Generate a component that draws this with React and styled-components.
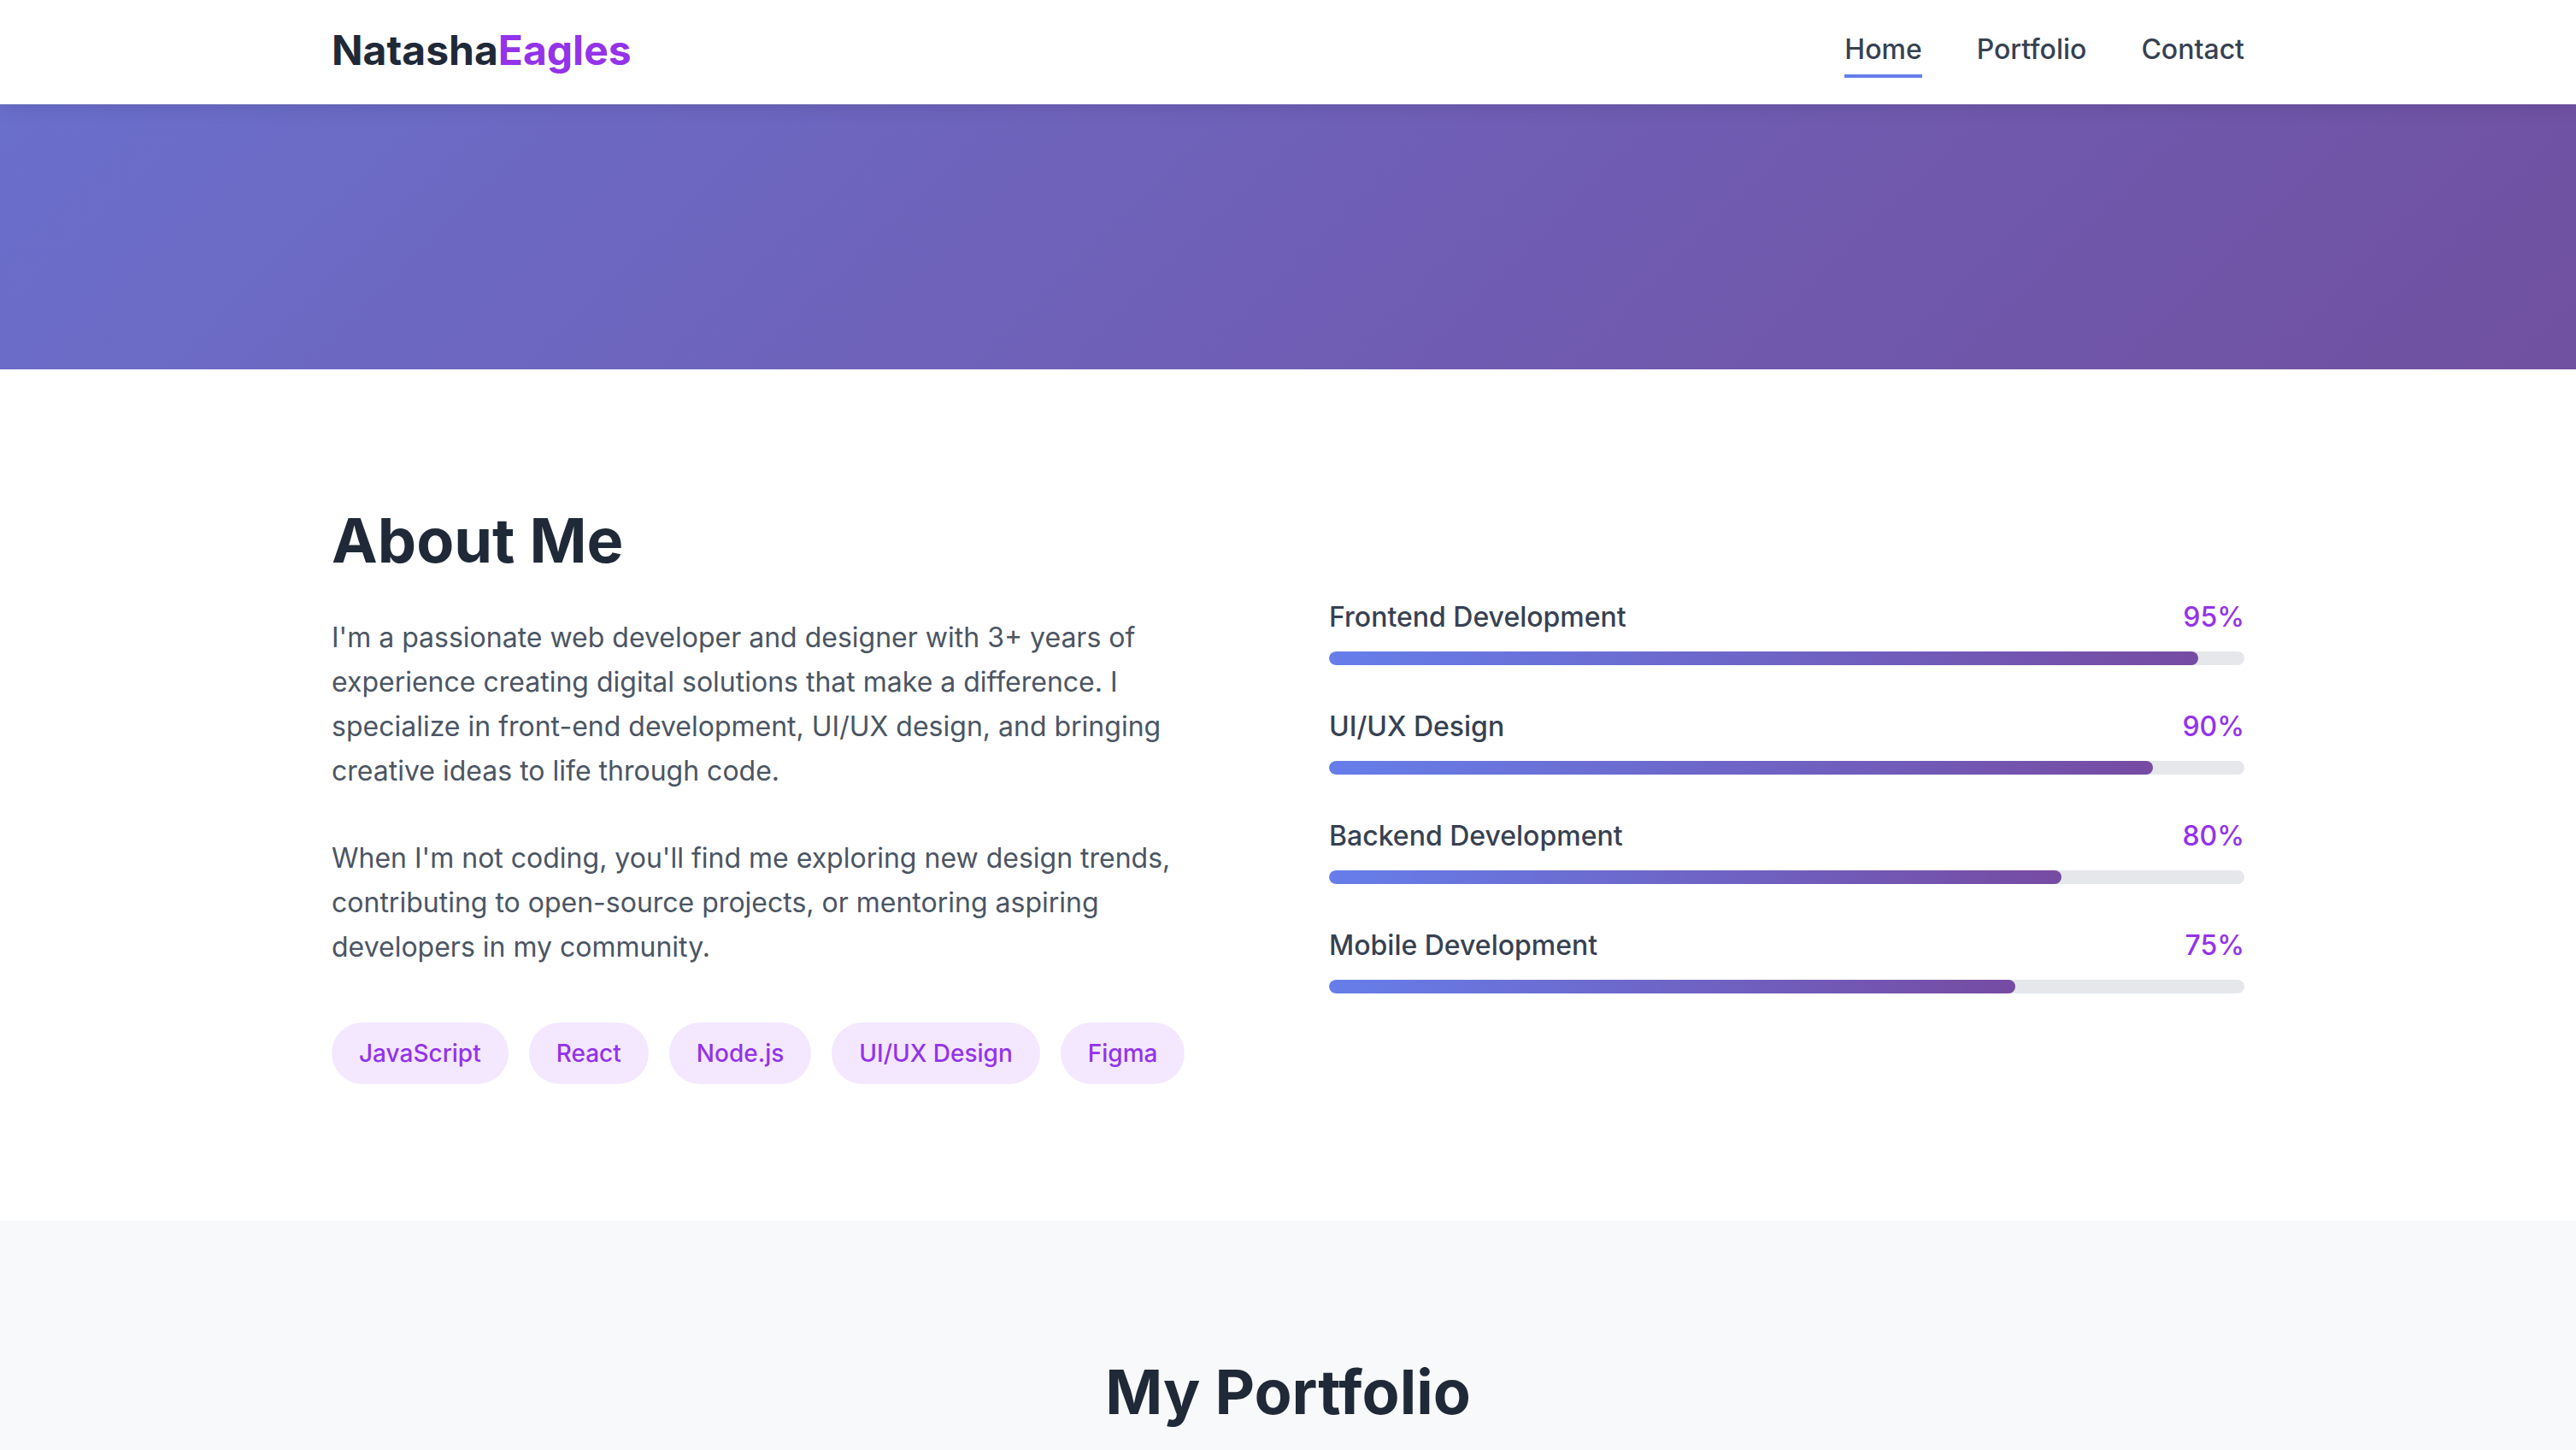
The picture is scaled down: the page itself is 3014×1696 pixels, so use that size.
import React from "react";
import styled, { createGlobalStyle } from "styled-components";

const skills = [
  { name: "Frontend Development", level: 95 },
  { name: "UI/UX Design", level: 90 },
  { name: "Backend Development", level: 80 },
  { name: "Mobile Development", level: 75 },
];

const tags = ["JavaScript", "React", "Node.js", "UI/UX Design", "Figma"];

function App() {
  return (
    <>
      <GlobalStyle />
      <Header>
        <Container>
          <HeaderRow>
            <Logo>
              Natasha<span>Eagles</span>
            </Logo>
            <Nav>
              <NavLink href="#" $active>
                Home
              </NavLink>
              <NavLink href="#">Portfolio</NavLink>
              <NavLink href="#">Contact</NavLink>
            </Nav>
          </HeaderRow>
        </Container>
      </Header>

      <Hero />

      {/* about */}
      <Section>
        <Container>
          <AboutGrid>
            <div>
              <Heading>About Me</Heading>
              <Text>
                I'm a passionate web developer and designer with 3+ years of
                experience creating digital solutions that make a difference. I
                specialize in front-end development, UI/UX design, and bringing
                creative ideas to life through code.
              </Text>
              <Text>
                When I'm not coding, you'll find me exploring new design
                trends, contributing to open-source projects, or mentoring
                aspiring developers in my community.
              </Text>
              <Tags>
                {tags.map((tag) => (
                  <Tag key={tag}>{tag}</Tag>
                ))}
              </Tags>
            </div>
            <Skills>
              {skills.map((skill) => (
                <Skill key={skill.name}>
                  <SkillHead>
                    <span>{skill.name}</span>
                    <Percent>{skill.level}%</Percent>
                  </SkillHead>
                  <Track>
                    <Fill style={{ width: `${skill.level}%` }} />
                  </Track>
                </Skill>
              ))}
            </Skills>
          </AboutGrid>
        </Container>
      </Section>

      {/* portfolio */}
      <Section $gray>
        <Container>
          <Heading $center>My Portfolio</Heading>
        </Container>
      </Section>
    </>
  );
}

const GlobalStyle = createGlobalStyle`
  * {
    box-sizing: border-box;
  }
  body {
    margin: 0;
    font-family: Inter, "Noto Sans", sans-serif;
    color: #1f2937;
    background: #fff;
  }
`;

const Container = styled.div`
  max-width: 2398px;
  margin: 0 auto;
  padding: 0 80px;
`;

const Header = styled.header`
  position: relative;
  z-index: 2;
  height: 122px;
  background: #fff;
  box-shadow: 0 4px 20px rgba(0, 0, 0, 0.1);
`;

const HeaderRow = styled.div`
  height: 122px;
  padding-bottom: 6px;
  display: flex;
  align-items: center;
  justify-content: space-between;
`;

const Logo = styled.div`
  font-size: 48px;
  font-weight: 700;
  color: #1f2937;
  span {
    color: #9333ea;
  }
`;

const Nav = styled.nav`
  display: flex;
  gap: 64px;
`;

const NavLink = styled.a`
  position: relative;
  font-size: 32px;
  font-weight: 500;
  line-height: 48px;
  color: #374151;
  text-decoration: none;
  &::after {
    content: "";
    position: absolute;
    left: 0;
    right: 0;
    bottom: -9px;
    height: 4px;
    background: #667eea;
    display: ${(p) => (p.$active ? "block" : "none")};
  }
`;

const Hero = styled.div`
  height: 310px;
  background: linear-gradient(135deg, #6a6fcb 0%, #6f5fb6 50%, #7050a0 100%);
`;

const Section = styled.section`
  padding: 160px 0;
  background: ${(p) => (p.$gray ? "#f8f9fa" : "#fff")};
`;

const AboutGrid = styled.div`
  display: grid;
  grid-template-columns: 1fr 1fr;
  gap: 96px;
  align-items: center;
`;

const Heading = styled.h2`
  margin: 0 0 48px;
  font-size: 72px;
  line-height: 80px;
  font-weight: 700;
  color: #1f2937;
  text-align: ${(p) => (p.$center ? "center" : "left")};
`;

const Text = styled.p`
  margin: 0 0 50px;
  font-size: 32px;
  line-height: 52px;
  color: #4b5563;
  &:last-of-type {
    margin-bottom: 0;
  }
`;

const Tags = styled.div`
  display: flex;
  flex-wrap: wrap;
  gap: 24px;
  margin-top: 62px;
`;

const Tag = styled.span`
  padding: 16px 32px;
  font-size: 28px;
  line-height: 40px;
  font-weight: 500;
  color: #9333ea;
  background: #f3e8ff;
  border-radius: 999px;
`;

const Skills = styled.div`
  display: flex;
  flex-direction: column;
  gap: 48px;
`;

const Skill = styled.div``;

const SkillHead = styled.div`
  display: flex;
  justify-content: space-between;
  margin-bottom: 16px;
  font-size: 32px;
  line-height: 48px;
  font-weight: 500;
  color: #374151;
`;

const Percent = styled.span`
  color: #9333ea;
`;

const Track = styled.div`
  height: 16px;
  background: #e5e7eb;
  border-radius: 999px;
  overflow: hidden;
`;

const Fill = styled.div`
  height: 100%;
  border-radius: 999px;
  background: linear-gradient(90deg, #667eea 0%, #764ba2 100%);
`;

export default App;
